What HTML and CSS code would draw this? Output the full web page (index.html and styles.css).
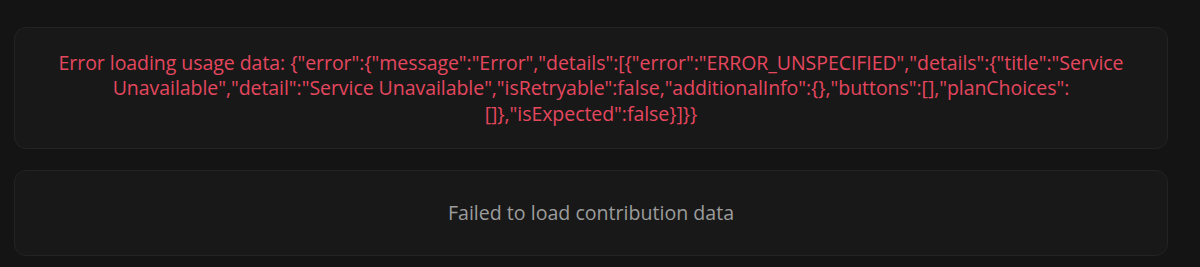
FILE: index.html
```html
<!DOCTYPE html>
<html>
<head>
<meta charset="utf-8">
<link rel="stylesheet" href="styles.css">
</head>
<body>
<div class="page">
  <div class="card card-error">
    <p class="error-text">Error loading usage data: {"error":{"message":"Error","details":[{"error":"ERROR_UNSPECIFIED","details":{"title":"Service Unavailable","detail":"Service Unavailable","isRetryable":false,"additionalInfo":{},"buttons":[],"planChoices":[]},"isExpected":false}]}}</p>
  </div>
  <div class="card card-empty">
    <p class="muted-text">Failed to load contribution data</p>
  </div>
</div>
</body>
</html>
```

FILE: styles.css
```css
html, body {
  margin: 0;
  padding: 0;
  background: #141414;
}
body {
  font-family: "Open Sans", "Noto Sans", sans-serif;
  width: 1200px;
  height: 267px;
  overflow: hidden;
}
.page {
  display: flex;
  flex-direction: column;
  gap: 21px;
  padding: 27px 32px 0 14px;
}
.card {
  background: #181818;
  border: 1px solid #232323;
  border-radius: 12px;
  text-align: center;
}
.card-error {
  padding: 22px 20px;
  box-sizing: border-box;
  height: 122px;
  display: flex;
  align-items: center;
  justify-content: center;
}
.card-empty {
  height: 86px;
  box-sizing: border-box;
  display: flex;
  align-items: center;
  justify-content: center;
}
.error-text {
  margin: 0;
  color: #e5475f;
  font-size: 19.5px;
  line-height: 25.5px;
  letter-spacing: -0.05px;
}
.muted-text {
  margin: 0;
  color: #9c9c9c;
  font-size: 19.6px;
  line-height: 24px;
}
```
